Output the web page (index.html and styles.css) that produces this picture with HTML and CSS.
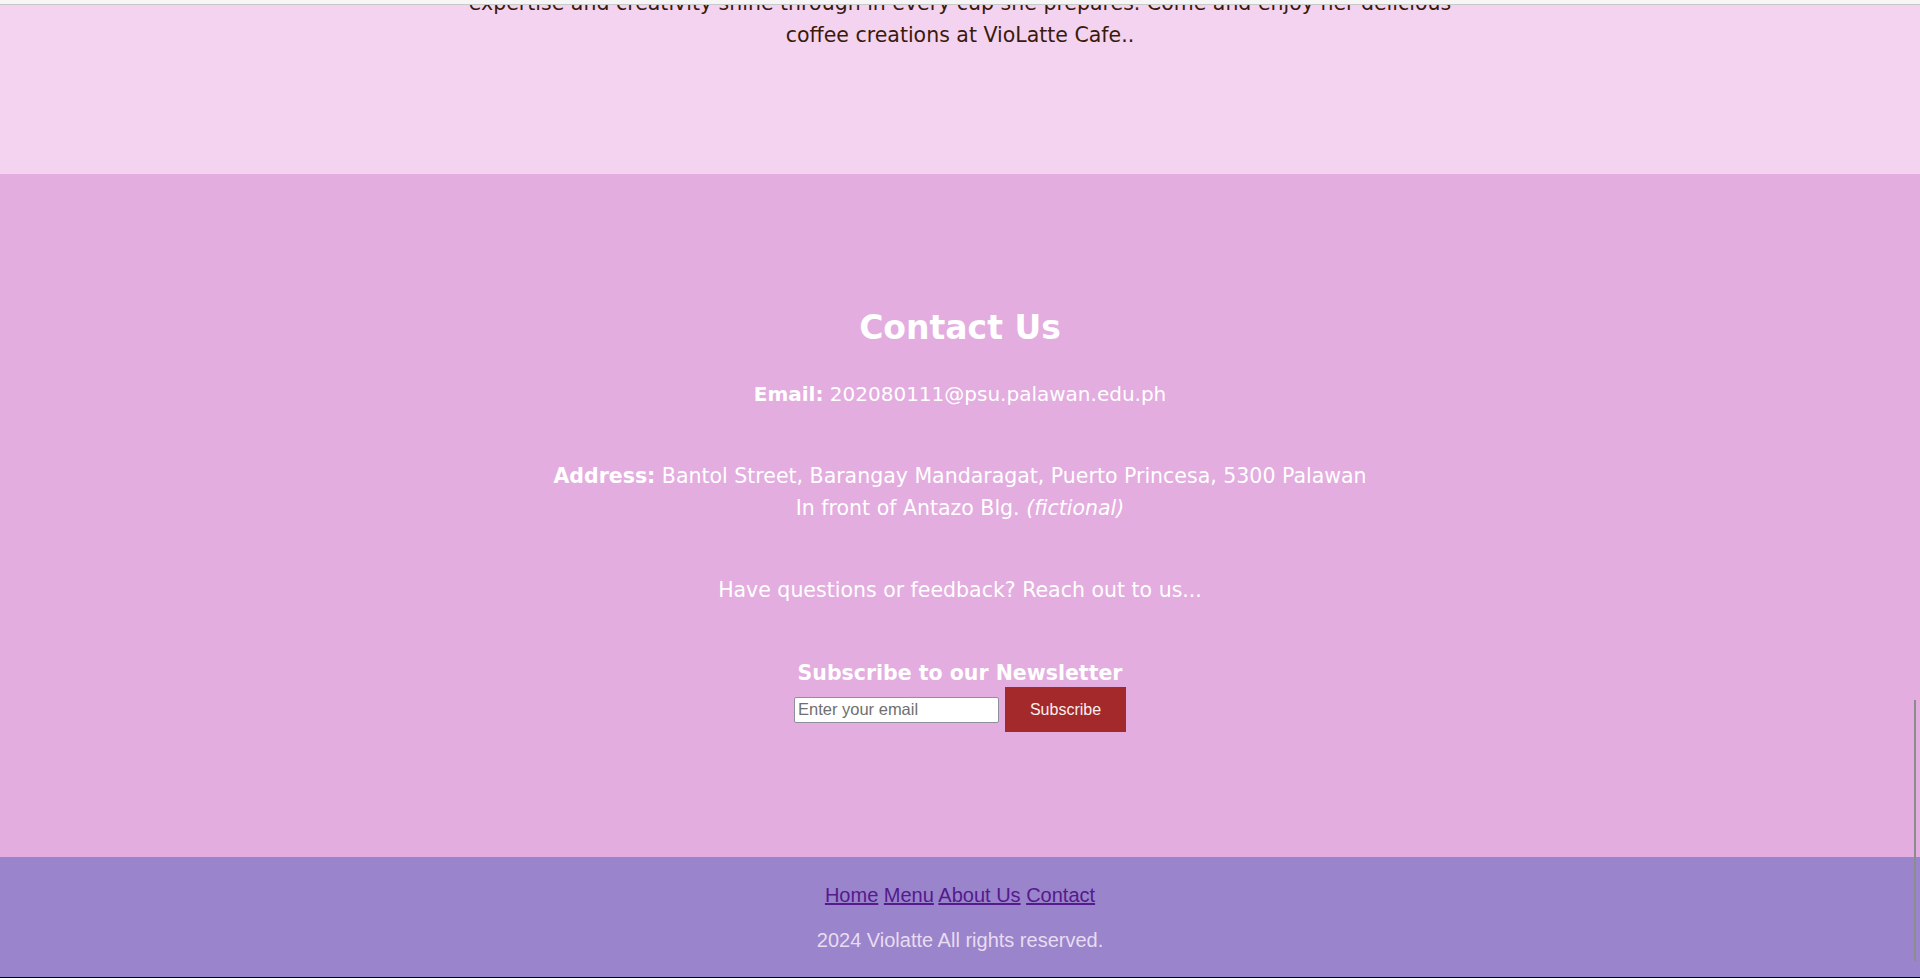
FILE: index.html
```html
<!DOCTYPE html>
<html lang="en">
<head>
<meta charset="utf-8">
<title>VioLatte Cafe</title>
<link rel="stylesheet" href="styles.css">
</head>
<body>
<div class="topbar"></div>
<section class="about">
  <p class="about-text">expertise and creativity shine through in every cup she prepares. Come and enjoy her delicious<br>coffee creations at VioLatte Cafe..</p>
</section>
<section class="contact">
  <h2 class="contact-title">Contact Us</h2>
  <p class="contact-email"><strong>Email:</strong> 202080111@psu.palawan.edu.ph</p>
  <p class="contact-address"><strong>Address:</strong> Bantol Street, Barangay Mandaragat, Puerto Princesa, 5300 Palawan<br>In front of Antazo Blg. <em>(fictional)</em></p>
  <p class="contact-cta">Have questions or feedback? Reach out to us...</p>
  <h3 class="news-title">Subscribe to our Newsletter</h3>
  <form class="news-form">
    <input class="news-input" type="email" placeholder="Enter your email">
    <button class="news-button" type="button">Subscribe</button>
  </form>
</section>
<footer class="footer">
  <nav class="footer-links"><a href="#">Home</a> <a href="#">Menu</a> <a href="#">About Us</a> <a href="#">Contact</a></nav>
  <p class="footer-copy">2024 Violatte All rights reserved.</p>
</footer>
<div class="bottom-line"></div>
<div class="scroll-thumb"></div>
</body>
</html>
```
FILE: styles.css
```css
* { box-sizing: border-box; }
html, body { margin: 0; padding: 0; }
body {
  font-family: "DejaVu Sans", sans-serif;
  background: #f4d3f0;
  overflow: hidden;
}
.topbar {
  height: 5px;
  background: #f6f6f6;
  border-bottom: 1px solid #c9c9c9;
}
.about {
  height: 169px;
  overflow: hidden;
  background: #f4d3f0;
  text-align: center;
}
.about-text {
  margin: -18px 0 0;
  font-size: 20.5px;
  line-height: 32px;
  color: #3a1a0c;
}
.contact {
  background: #e3addf;
  color: #ffffff;
  text-align: center;
  display: flex;
  flex-direction: column;
  align-items: center;
  padding: 134px 0 125px;
}
.contact-title {
  margin: 0;
  font-size: 33px;
  line-height: 40px;
  font-weight: bold;
}
.contact-email,
.contact-address,
.contact-cta {
  margin: 0;
  font-size: 20.5px;
  line-height: 32px;
}
.contact-email { margin-top: 30px; font-size: 20px; }
.contact-address { margin-top: 50px; }
.contact-cta { margin-top: 50px; }
.news-title {
  margin: 55px 0 0;
  font-size: 20.5px;
  line-height: 24px;
  font-weight: bold;
}
.news-form {
  margin-top: 2px;
  display: flex;
  align-items: center;
  gap: 6px;
}
.news-input {
  width: 205px;
  height: 26px;
  padding: 1px 3px;
  font-family: "Liberation Sans", sans-serif;
  font-size: 16.5px;
  color: #333;
  background: #fff;
  border: 1px solid #8f8f9d;
  border-radius: 2px;
}
.news-input::placeholder { color: #6f6f6f; }
.news-button {
  width: 121px;
  height: 45px;
  padding: 0;
  border: none;
  background: #a3292b;
  color: #fbeeee;
  font-family: "Liberation Sans", sans-serif;
  font-size: 16px;
}
.footer {
  background: #9a84cc;
  padding: 27px 0 25px;
  text-align: center;
  font-family: "Liberation Sans", sans-serif;
  font-size: 20px;
  line-height: 23px;
}
.footer-links a { color: #551a8b; }
.footer-copy {
  margin: 22px 0 0;
  color: #e8dcf1;
}
.bottom-line {
  height: 1px;
  background: #000;
}
.scroll-thumb {
  position: fixed;
  right: 4px;
  top: 700px;
  width: 2px;
  height: 261px;
  background: #8c8c8c;
}
```
